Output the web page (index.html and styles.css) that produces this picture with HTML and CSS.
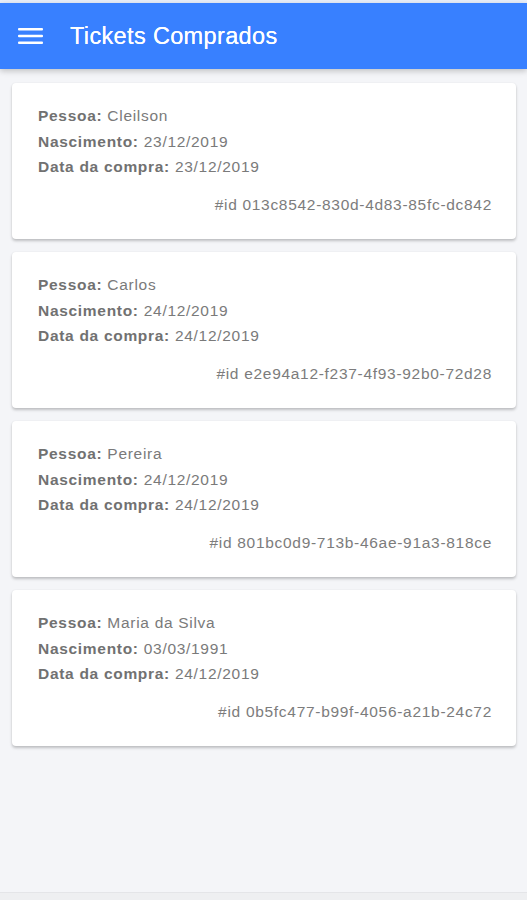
FILE: index.html
```html
<!DOCTYPE html>
<html lang="pt">
<head>
<meta charset="utf-8">
<title>Tickets Comprados</title>
<link rel="stylesheet" href="styles.css">
</head>
<body>
<div class="app">
  <header class="toolbar">
    <button class="menu-btn" aria-label="menu">
      <svg width="25" height="16" viewBox="0 0 25 16"><rect x="0" y="0" width="25" height="2.6" rx="1" fill="#fff"/><rect x="0" y="6.7" width="25" height="2.6" rx="1" fill="#fff"/><rect x="0" y="13.4" width="25" height="2.6" rx="1" fill="#fff"/></svg>
    </button>
    <h1 class="title">Tickets Comprados</h1>
  </header>
  <main class="content">
    <div class="card">
      <p class="row"><b>Pessoa:</b> Cleilson</p>
      <p class="row"><b>Nascimento:</b> 23/12/2019</p>
      <p class="row"><b>Data da compra:</b> 23/12/2019</p>
      <p class="id">#id 013c8542-830d-4d83-85fc-dc842</p>
    </div>
    <div class="card">
      <p class="row"><b>Pessoa:</b> Carlos</p>
      <p class="row"><b>Nascimento:</b> 24/12/2019</p>
      <p class="row"><b>Data da compra:</b> 24/12/2019</p>
      <p class="id">#id e2e94a12-f237-4f93-92b0-72d28</p>
    </div>
    <div class="card">
      <p class="row"><b>Pessoa:</b> Pereira</p>
      <p class="row"><b>Nascimento:</b> 24/12/2019</p>
      <p class="row"><b>Data da compra:</b> 24/12/2019</p>
      <p class="id">#id 801bc0d9-713b-46ae-91a3-818ce</p>
    </div>
    <div class="card">
      <p class="row"><b>Pessoa:</b> Maria da Silva</p>
      <p class="row"><b>Nascimento:</b> 03/03/1991</p>
      <p class="row"><b>Data da compra:</b> 24/12/2019</p>
      <p class="id">#id 0b5fc477-b99f-4056-a21b-24c72</p>
    </div>
  </main>
  <footer class="bottom"></footer>
</div>
</body>
</html>
```
FILE: styles.css
```css
* { box-sizing: border-box; }
html, body { margin: 0; padding: 0; }
body {
  font-family: "Liberation Sans", Arial, sans-serif;
  background: #f4f5f8;
}
.app {
  height: 900px;
  display: flex;
  flex-direction: column;
  border-top: 3px solid #e9effa;
}
.toolbar {
  height: 66px;
  background: #3880ff;
  display: flex;
  align-items: center;
  padding-left: 18px;
  box-shadow: 0 2px 6px rgba(0,0,0,0.22);
  position: relative;
  z-index: 1;
}
.menu-btn {
  background: none;
  border: 0;
  padding: 0;
  margin: 0;
  width: 25px;
  height: 16px;
  display: flex;
}
.title {
  margin: 0 0 0 27px;
  color: #fff;
  font-size: 23.5px;
  font-weight: 400;
  letter-spacing: 0.35px;
  text-shadow: 0 0 0.6px #fff;
}
.content {
  flex: 1;
  padding: 14px 11px 0 12px;
  display: flex;
  flex-direction: column;
  gap: 13px;
}
.card {
  background: #fff;
  border-radius: 4px;
  box-shadow: 0 2px 3px rgba(0,0,0,0.22), 0 0 2px rgba(0,0,0,0.06);
  height: 156px;
  padding: 20px 25px 0 26px;
  color: #7a7a7a;
  font-size: 15.5px;
  letter-spacing: 0.7px;
}
.row {
  margin: 0;
  line-height: 25.5px;
}
.row b { font-weight: 700; color: #717171; }
.id {
  margin: 13px -1px 0 0;
  text-align: right;
  line-height: 24px;
  color: #7c7c7c;
}
.bottom {
  height: 8px;
  background: #eeeff1;
  border-top: 1px solid #e4e5e8;
}
```
